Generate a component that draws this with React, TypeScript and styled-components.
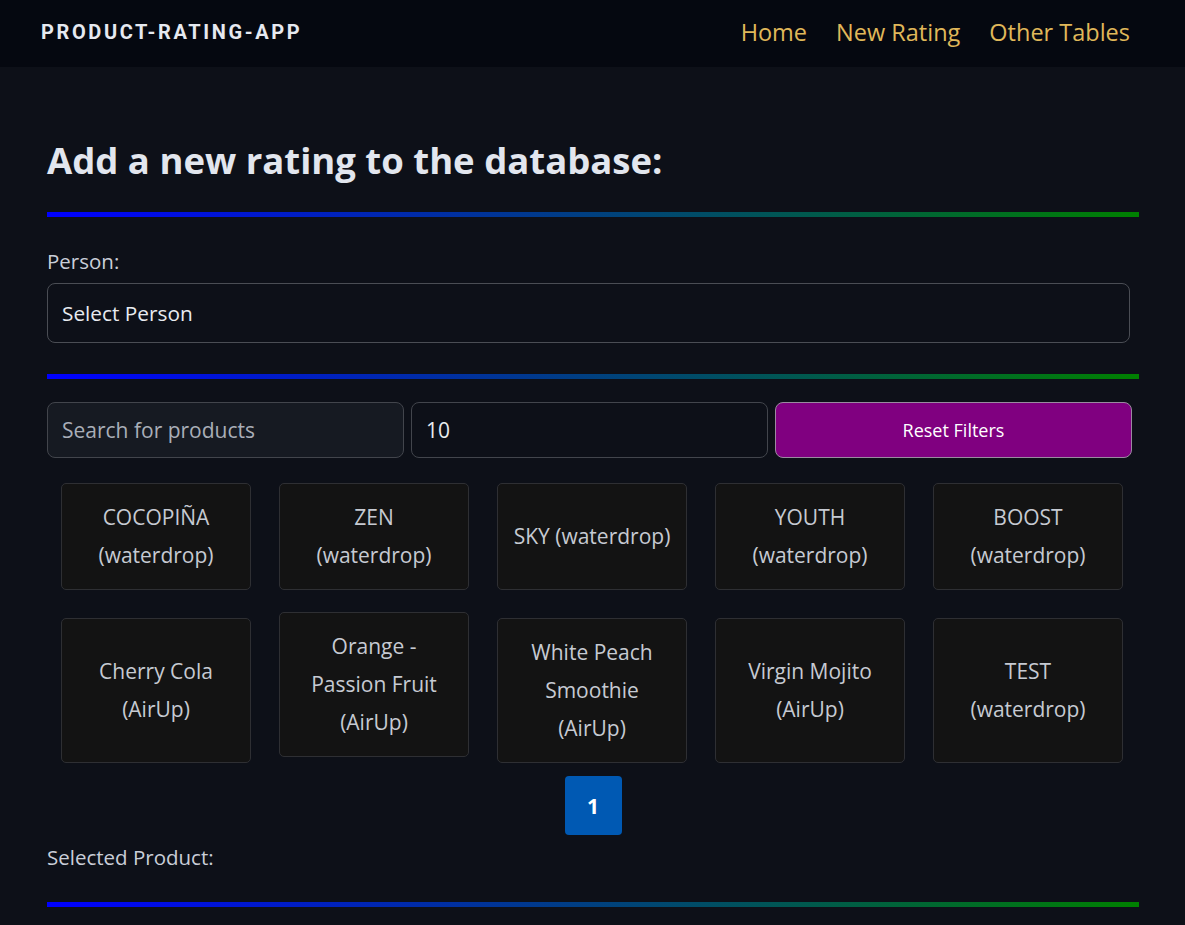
import React from 'react';
import styled, { createGlobalStyle } from 'styled-components';

const GlobalStyle = createGlobalStyle`
    html, body {
        margin: 0;
        padding: 0;
        background: #0d1018;
    }
    body {
        font-family: "Open Sans", "Noto Sans", sans-serif;
        color: #e2e6ee;
    }
    * {
        box-sizing: border-box;
    }
`

interface Product {
    name: string,
    brand: string,
    lifted?: boolean
}

const products: Product[] = [
    { name: 'COCOPIÑA', brand: 'waterdrop' },
    { name: 'ZEN', brand: 'waterdrop' },
    { name: 'SKY', brand: 'waterdrop' },
    { name: 'YOUTH', brand: 'waterdrop' },
    { name: 'BOOST', brand: 'waterdrop' },
    { name: 'Cherry Cola', brand: 'AirUp' },
    { name: 'Orange - Passion Fruit', brand: 'AirUp', lifted: true },
    { name: 'White Peach Smoothie', brand: 'AirUp' },
    { name: 'Virgin Mojito', brand: 'AirUp' },
    { name: 'TEST', brand: 'waterdrop' },
]

const App: React.FC = () => {
    return (<div>
        <GlobalStyle />
        <NavBar>
            <Logo>PRODUCT-RATING-APP</Logo>
            <NavLinks>
                <NavLink href="#">Home</NavLink>
                <NavLink href="#">New Rating</NavLink>
                <NavLink href="#">Other Tables</NavLink>
            </NavLinks>
        </NavBar>
        <Page>
            <Heading>Add a new rating to the database:</Heading>
            <Divider />
            <Label>Person:</Label>
            <Select>Select Person</Select>
            <Divider />
            <FilterRow>
                <SearchInput placeholder="Search for products" readOnly />
                <NumberInput value="10" readOnly />
                <ResetButton>Reset Filters</ResetButton>
            </FilterRow>
            <ProductGrid>
                {products.map((p) => (
                    <ProductCard key={p.name} $lifted={p.lifted}>
                        {p.name} ({p.brand})
                    </ProductCard>
                ))}
            </ProductGrid>
            <Pagination>
                <PageButton>1</PageButton>
            </Pagination>
            <Label $top={8} $bottom={31}>Selected Product:</Label>
            <Divider />
        </Page>
    </div>);
}

const NavBar = styled.nav`
    display: flex;
    align-items: center;
    justify-content: space-between;
    height: 67px;
    padding: 0 55px 0 41px;
    background: #050810;
`

const Logo = styled.div`
    font-family: Roboto, "Liberation Sans", sans-serif;
    font-weight: 700;
    font-size: 20px;
    letter-spacing: 2.6px;
    color: #e6e9f0;
    margin-top: -4px;
`

const NavLinks = styled.div`
    display: flex;
    gap: 29px;
    margin-top: -3px;
`

const NavLink = styled.a`
    color: #e0b85a;
    text-decoration: none;
    font-size: 23.5px;
`

const Page = styled.main`
    padding: 0 46px 20px 47px;
`

const Heading = styled.h1`
    margin: 0 0 28px;
    padding: 69px 0 0;
    font-size: 36.5px;
    font-weight: 700;
    line-height: 48px;
    color: #e2e6ee;
`

const Divider = styled.div`
    height: 5px;
    background: linear-gradient(to right, #0000ff, #008000);
`

const Label = styled.div<{ $top?: number, $bottom?: number }>`
    margin-top: ${(p) => p.$top ?? 30}px;
    margin-bottom: ${(p) => p.$bottom ?? 0}px;
    font-size: 20.5px;
    line-height: 28px;
    color: #c9ced8;
`

const Select = styled.div`
    display: flex;
    align-items: center;
    height: 60px;
    margin: 8px 9px 31px 0;
    padding: 0 14px;
    border: 1px solid #4a4d54;
    border-radius: 8px;
    font-size: 20.8px;
    color: #e8ebf0;
    background: #0d1018;
`

const FilterRow = styled.div`
    display: grid;
    grid-template-columns: repeat(3, 1fr);
    gap: 7px;
    margin: 23px 7px 0 0;
`

const InputBase = styled.input`
    width: 100%;
    height: 56px;
    padding: 0 14px;
    border: 1px solid #42454c;
    border-radius: 8px;
    font-family: inherit;
    font-size: 21px;
    color: #e8ebf0;
    outline: none;
    &::placeholder {
        color: #a9aeb8;
    }
`

const SearchInput = styled(InputBase)`
    background: #161a22;
`

const NumberInput = styled(InputBase)`
    background: #0d1018;
`

const ResetButton = styled.button`
    height: 56px;
    border: 1px solid #9a8aa0;
    border-radius: 8px;
    background: #800080;
    color: #ffffff;
    font-family: inherit;
    font-size: 18px;
`

const ProductGrid = styled.div`
    display: grid;
    grid-template-columns: repeat(5, 190px);
    gap: 28px;
    padding: 25px 14px 13px;
`

const ProductCard = styled.div<{ $lifted?: boolean }>`
    display: flex;
    align-items: center;
    justify-content: center;
    min-height: 106px;
    padding: 14px 14px 15px;
    background: #131313;
    border: 1px solid #2e2f33;
    border-radius: 5px;
    text-align: center;
    font-size: 21px;
    line-height: 38px;
    color: #c6cad2;
    transform: ${(p) => (p.$lifted ? 'translateY(-6px)' : 'none')};
`

const Pagination = styled.div`
    display: flex;
    justify-content: center;
`

const PageButton = styled.div`
    display: flex;
    align-items: center;
    justify-content: center;
    width: 57px;
    height: 59px;
    border-radius: 4px;
    background: #0059b3;
    color: #ffffff;
    font-weight: 700;
    font-size: 21px;
`

export default App;
